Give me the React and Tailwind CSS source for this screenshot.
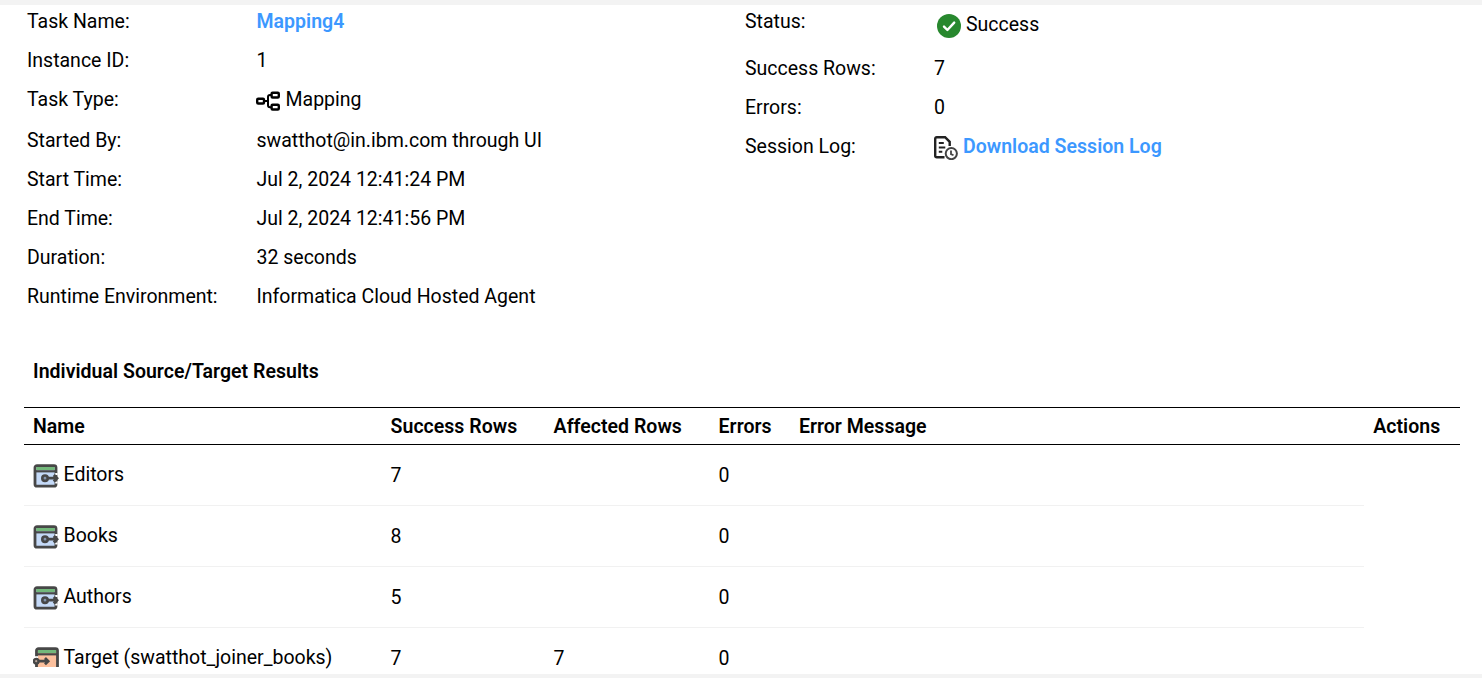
import React from "react";

function MappingIcon() {
  return (
    <svg className="h-[24px] w-[24px] shrink-0" viewBox="0 0 24 24" fill="none" stroke="#000" strokeWidth="2.4">
      <rect x="1.2" y="9.7" width="6.8" height="4.8" rx="1" />
      <rect x="15.6" y="3.7" width="7.2" height="4.8" rx="1" />
      <rect x="15.6" y="15.7" width="7.2" height="4.8" rx="1" />
      <path d="M8 12.1h4M15.5 6H14q-2 0-2 2v8.2q0 2 2 2h1.5" strokeWidth="2" />
    </svg>
  );
}

function SuccessIcon() {
  return (
    <svg className="h-[24px] w-[24px] shrink-0" viewBox="0 0 24 24" fill="none">
      <circle cx="12" cy="12" r="12" fill="#28882e" />
      <path d="M7 12.6l3.4 3.4 6.8-7.4" stroke="#fff" strokeWidth="2.4" strokeLinecap="round" strokeLinejoin="round" />
    </svg>
  );
}

function LogIcon() {
  return (
    <svg className="h-[24px] w-[24px] shrink-0" viewBox="0 0 24 24" fill="none" stroke="#222" strokeWidth="2.4">
      <path d="M10.5 21.3H2.8q-1.6 0-1.6-1.6V2.8q0-1.6 1.6-1.6h8.3l4.6 4.6V10" />
      <path d="M4.8 7h5M4.8 11.4h6.5M4.8 15.8h3.5" strokeWidth="2" />
      <circle cx="17.3" cy="17.6" r="5.6" fill="#fff" stroke="#444" strokeWidth="2" />
      <path d="M17 14.5v3.6l2.5 1.2" stroke="#444" strokeWidth="1.8" />
    </svg>
  );
}

function SourceIcon() {
  return (
    <svg className="h-[24px] w-[26px] shrink-0" viewBox="0 0 26 24" fill="none">
      <rect x="2" y="1.6" width="21" height="20.6" rx="2" fill="#c5daf8" stroke="#474747" strokeWidth="2.8" />
      <path d="M3.3 3h18.4v3H3.3z" fill="#73b87b" />
      <path d="M2 7.3h21" stroke="#474747" strokeWidth="2.2" />
      <path d="M23.4 9v2M23.4 17.5v2" stroke="#fff" strokeWidth="2.4" />
      <circle cx="12" cy="14.2" r="2.7" fill="#8294ad" stroke="#474747" strokeWidth="2.6" />
      <path d="M14.5 14.2h9.5M20.8 11l3.2 3.2-3.2 3.2" stroke="#474747" strokeWidth="2.8" />
    </svg>
  );
}

function TargetIcon() {
  return (
    <svg className="h-[20px] w-[26px] shrink-0" viewBox="0 0 26 20" fill="none">
      <rect x="3.5" y="1.6" width="21" height="20.6" rx="2" fill="#fcc09d" stroke="#474747" strokeWidth="2.8" />
      <path d="M4.9 3h18.2v3H4.9z" fill="#73b87b" />
      <path d="M3.5 7.3h21" stroke="#474747" strokeWidth="2.2" />
      <path d="M3.5 9.2v2" stroke="#fff" strokeWidth="3" />
      <circle cx="3.2" cy="14.2" r="2.3" fill="#b6a297" stroke="#474747" strokeWidth="2.4" />
      <path d="M5.5 14.2h10M12 11l3.2 3.2-3.2 3.2" stroke="#474747" strokeWidth="2.7" />
    </svg>
  );
}

function Row({ label, labelWidth, className = "h-[39px]", children }) {
  return (
    <div className={`flex items-start ${className}`}>
      <dt className={`shrink-0 ${labelWidth}`}>{label}</dt>
      <dd className="flex">{children}</dd>
    </div>
  );
}

const results = [
  { name: "Editors", success: 7, affected: "", errors: 0 },
  { name: "Books", success: 8, affected: "", errors: 0 },
  { name: "Authors", success: 5, affected: "", errors: 0 },
  { name: "Target (swatthot_joiner_books)", success: 7, affected: 7, errors: 0, target: true },
];

export default function App() {
  const left = "w-[229.5px]";
  const right = "w-[189px]";
  return (
    <div className="flex h-[678px] w-[1482px] flex-col overflow-hidden border-t-[5px] border-b-4 border-[#f3f3f3] bg-white font-['Roboto',sans-serif] text-[19.5px] leading-[24px] text-black">
      <main className="h-[669px] shrink-0 overflow-hidden pt-[5px]">
        <section className="flex h-[350px] pl-[27px]">
          <dl className="w-[718px] shrink-0">
            <Row label="Task Name:" labelWidth={left}>
              <a className="font-semibold tracking-[0.03px] text-[#3c98ff]">Mapping4</a>
            </Row>
            <Row label="Instance ID:" labelWidth={left}>1</Row>
            <Row label="Task Type:" labelWidth={left} className="h-[41px]">
              <span className="-ml-[0.5px] mr-[5.5px] pt-px"><MappingIcon /></span>
              Mapping
            </Row>
            <Row label="Started By:" labelWidth={left}>swatthot@in.ibm.com through UI</Row>
            <Row label="Start Time:" labelWidth={left}>Jul 2, 2024 12:41:24 PM</Row>
            <Row label="End Time:" labelWidth={left}>Jul 2, 2024 12:41:56 PM</Row>
            <Row label="Duration:" labelWidth={left}>32 seconds</Row>
            <Row label="Runtime Environment:" labelWidth={left}>Informatica Cloud Hosted Agent</Row>
          </dl>
          <dl>
            <Row label="Status:" labelWidth={right} className="h-[47px]">
              <span className="ml-[3px] mr-[5px] pt-[4px]"><SuccessIcon /></span>
              <span className="pt-[3px]">Success</span>
            </Row>
            <Row label="Success Rows:" labelWidth={right}>7</Row>
            <Row label="Errors:" labelWidth={right}>0</Row>
            <Row label="Session Log:" labelWidth={right}>
              <span className="mr-[5px] pt-px"><LogIcon /></span>
              <a className="font-semibold tracking-[0.02px] text-[#3c98ff]">Download Session Log</a>
            </Row>
          </dl>
        </section>

        <section className="ml-[24px] w-[1436px]">
          <h2 className="h-[47px] pl-[9px] font-semibold tracking-[0.03px]">Individual Source/Target Results</h2>
          <div className="grid h-[38px] grid-cols-[357.6px_163px_165px_80.4px_574.3px_1fr] items-center border-y border-black pt-[2px] pl-[9px] font-semibold tracking-[0.02px]">
            <span>Name</span>
            <span>Success Rows</span>
            <span>Affected Rows</span>
            <span>Errors</span>
            <span>Error Message</span>
            <span>Actions</span>
          </div>
          {results.map((r) => (
            <div key={r.name} className="grid h-[61px] w-[1340px] grid-cols-[357.6px_163px_165px_1fr] items-center border-b border-[#f1f1f1] pt-[2px] pl-[9px] leading-[18px]">
              <span className="flex h-[26px] items-start">
                <span className="mr-[4.5px] pt-px">{r.target ? <TargetIcon /> : <SourceIcon />}</span>
                <span className="leading-[24px]">{r.name}</span>
              </span>
              <span>{r.success}</span>
              <span>{r.affected}</span>
              <span>{r.errors}</span>
            </div>
          ))}
        </section>
      </main>
    </div>
  );
}
